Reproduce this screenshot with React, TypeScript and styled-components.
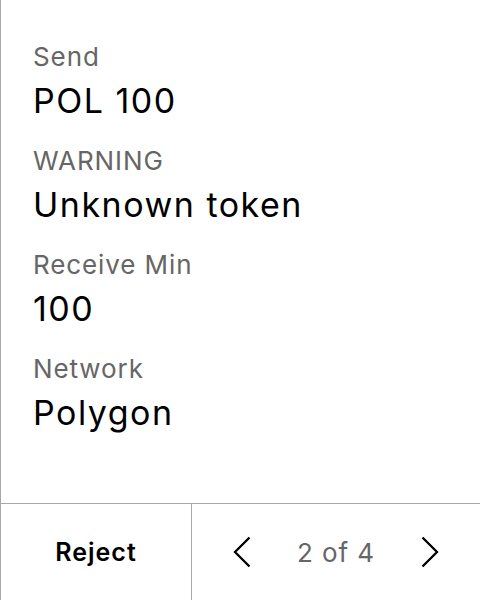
import React, { FC } from 'react';
import styled, { createGlobalStyle } from 'styled-components';

const GlobalStyle = createGlobalStyle`
  html, body {
    margin: 0;
    padding: 0;
    background: #ffffff;
  }
  body {
    font-family: Inter, "Noto Sans", sans-serif;
  }
`

const Screen = styled.div`
  width: 480px;
  height: 600px;
  box-sizing: border-box;
  border-left: 1px solid #a8a8a8;
  display: flex;
  flex-direction: column;
  background: #ffffff;
`

const Details = styled.div`
  flex: 1;
  display: flex;
  flex-direction: column;
  gap: 24px;
  padding: 41px 32px 0;
`

const Field = styled.div`
  display: flex;
  flex-direction: column;
  gap: 8px;
`

const Label = styled.div`
  font-size: 26px;
  line-height: 32px;
  letter-spacing: 0.9px;
  color: #666666;
`

const Value = styled.div`
  font-size: 34px;
  line-height: 40px;
  letter-spacing: 1.5px;
  color: #000000;
`

const Footer = styled.div`
  height: 96px;
  border-top: 1px solid #a8a8a8;
  display: flex;
`

const RejectButton = styled.button`
  width: 191px;
  border: none;
  border-right: 1px solid #a8a8a8;
  background: none;
  font: inherit;
  font-size: 25px;
  font-weight: 600;
  letter-spacing: 1px;
  color: #000000;
  padding: 0;
  cursor: pointer;
`

const Pager = styled.div`
  flex: 1;
  display: flex;
  align-items: center;
  justify-content: center;
  gap: 46px;
`

const NavButton = styled.button`
  border: none;
  background: none;
  padding: 0;
  display: flex;
  align-items: center;
  cursor: pointer;
`

const PageText = styled.span`
  font-size: 26px;
  letter-spacing: 0.9px;
  color: #666666;
`

const Chevron: FC<{ dir: 'left' | 'right' }> = ({ dir }) => (
  <svg width="18" height="32" viewBox="0 0 18 32">
    <path
      d={dir === 'left' ? 'M16.5 1.5 L2 16 L16.5 30.5' : 'M1.5 1.5 L16 16 L1.5 30.5'}
      fill="none"
      stroke="#000"
      strokeWidth="2.3"
    />
  </svg>
)

const fields = [
  { label: 'Send', value: 'POL 100' },
  { label: 'WARNING', value: 'Unknown token' },
  { label: 'Receive Min', value: '100' },
  { label: 'Network', value: 'Polygon' },
]

const App: FC = () => (
  <>
    <GlobalStyle />
    <Screen>
      <Details>
        {fields.map((f) => (
          <Field key={f.label}>
            <Label>{f.label}</Label>
            <Value>{f.value}</Value>
          </Field>
        ))}
      </Details>
      <Footer>
        <RejectButton>Reject</RejectButton>
        <Pager>
          <NavButton><Chevron dir="left" /></NavButton>
          <PageText>2 of 4</PageText>
          <NavButton><Chevron dir="right" /></NavButton>
        </Pager>
      </Footer>
    </Screen>
  </>
)

export default App
